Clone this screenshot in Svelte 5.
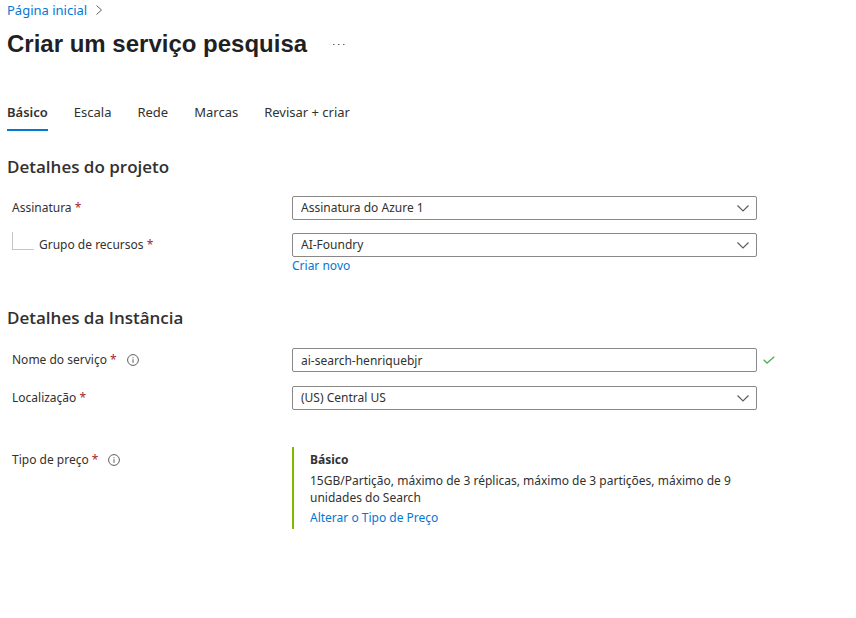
<script>
  const tabs = ['Básico', 'Escala', 'Rede', 'Marcas', 'Revisar + criar'];
  let active = $state('Básico');
  let subscription = $state('Assinatura do Azure 1');
  let group = $state('AI-Foundry');
  let name = $state('ai-search-henriquebjr');
  let region = $state('(US) Central US');
</script>

{#snippet chevron()}
  <svg class="chevron" viewBox="0 0 12 8" aria-hidden="true"><path d="M.5 1.5 6 7 11.5 1.5" /></svg>
{/snippet}

{#snippet info(label)}
  <button class="info" type="button" aria-label={label}>
    <svg viewBox="0 0 12 12" aria-hidden="true">
      <circle cx="6" cy="6" r="5.4" />
      <path d="M6 5.2V8.8M6 3.2V4.2" />
    </svg>
  </button>
{/snippet}

<main>
  <nav class="crumbs" aria-label="Trilha">
    <a href="#inicio">Página inicial</a>
    <svg viewBox="0 0 8 10" aria-hidden="true"><path d="M1.5.5 6.5 5 1.5 9.5" /></svg>
  </nav>

  <header>
    <h1>Criar um serviço pesquisa</h1>
    <button class="more" type="button" aria-label="Mais">
      <svg viewBox="0 0 12 2" aria-hidden="true"><path d="M0 1.5h1.5M5 1.5h1.5M10 1.5h1.5" /></svg>
    </button>
  </header>

  <div class="tabs" role="tablist">
    {#each tabs as tab}
      <button type="button" role="tab" aria-selected={active === tab} class:active={active === tab} onclick={() => (active = tab)}>{tab}</button>
    {/each}
  </div>

  <form onsubmit={(e) => e.preventDefault()}>
    <section>
      <h2>Detalhes do projeto</h2>
      <div class="row">
        <div class="label"><label for="subscription">Assinatura <b>*</b></label></div>
        <div class="field">
          <select id="subscription" bind:value={subscription}><option>Assinatura do Azure 1</option></select>
          {@render chevron()}
        </div>
      </div>
      <div class="row">
        <div class="label child"><span class="branch"></span><label for="group">Grupo de recursos <b>*</b></label></div>
        <div class="field">
          <select id="group" bind:value={group}><option>AI-Foundry</option></select>
          {@render chevron()}
        </div>
        <a class="below" href="#novo">Criar novo</a>
      </div>
    </section>

    <section class="instance">
      <h2>Detalhes da Instância</h2>
      <div class="row">
        <div class="label"><label for="name">Nome do serviço <b>*</b></label>{@render info('Sobre o nome do serviço')}</div>
        <div class="field"><input id="name" type="text" bind:value={name} /></div>
        <svg class="valid" viewBox="0 0 12 8" aria-hidden="true"><path d="M.7 3.8 4 7 11.3.7" /></svg>
      </div>
      <div class="row">
        <div class="label"><label for="region">Localização <b>*</b></label></div>
        <div class="field">
          <select id="region" bind:value={region}><option>(US) Central US</option></select>
          {@render chevron()}
        </div>
      </div>
      <div class="row pricing">
        <div class="label"><span>Tipo de preço <b>*</b></span>{@render info('Sobre o tipo de preço')}</div>
        <div class="tier">
          <strong>Básico</strong>
          <p>15GB/Partição, máximo de 3 réplicas, máximo de 3 partições, máximo de 9 unidades do Search</p>
          <a href="#preco">Alterar o Tipo de Preço</a>
        </div>
      </div>
    </section>
  </form>
</main>

<style>
  :global(body) {
    background: #fff;
  }
  main {
    padding: 0 8px 24px 7px;
    font: 13px/18px 'Noto Sans', 'Open Sans', sans-serif;
    color: #323130;
  }
  form {
    font-size: 12px;
  }
  a {
    color: #0078d4;
    text-decoration: none;
  }
  a:hover {
    text-decoration: underline;
  }
  button {
    padding: 0;
    border: 0;
    background: none;
    font: inherit;
    color: inherit;
    cursor: pointer;
  }
  svg {
    display: block;
    fill: none;
    stroke: #605e5c;
  }
  .crumbs {
    display: flex;
    align-items: center;
    gap: 8px;
    height: 20px;
  }
  .crumbs svg {
    width: 8px;
    height: 10px;
  }
  header {
    display: flex;
    align-items: center;
    gap: 26px;
    margin-top: 8px;
  }
  h1 {
    margin: 0;
    font: bold 24px/32px 'Liberation Sans', Arial, sans-serif;
    color: #1f1f24;
  }
  .more svg {
    width: 12px;
    height: 2px;
  }
  .tabs {
    display: flex;
    gap: 26px;
    margin-top: 35px;
  }
  .tabs button {
    height: 36px;
    border-bottom: 2px solid transparent;
  }
  .tabs .active {
    border-color: #0078d4;
    font-weight: 600;
  }
  section {
    display: grid;
    gap: 13px;
    margin-top: 24px;
  }
  h2 {
    margin: 0 0 4px;
    font: 600 17px/24px 'Open Sans', 'Noto Sans', sans-serif;
  }
  .instance {
    gap: 14px;
    margin-top: 31px;
  }
  .row {
    display: grid;
    grid-template-columns: 280px minmax(0, 465px) 12px;
    column-gap: 5px;
    align-items: center;
  }
  .label {
    display: flex;
    align-items: center;
    gap: 10px;
    padding-left: 5px;
  }
  .label b {
    color: #a4262c;
    font-weight: 400;
  }
  .child {
    gap: 5px;
  }
  .branch {
    align-self: flex-start;
    width: 21px;
    height: 17px;
    margin-top: -4px;
    border: solid #c8c6c4;
    border-width: 0 0 1px 1px;
  }
  .info svg {
    width: 12px;
    height: 12px;
  }
  .field {
    display: grid;
    align-items: center;
  }
  .field > * {
    grid-area: 1 / 1;
  }
  select,
  input {
    box-sizing: border-box;
    width: 100%;
    height: 24px;
    margin: 0;
    padding: 0 8px;
    border: 1px solid #8a8886;
    border-radius: 2px;
    background: #fff;
    font: inherit;
    color: inherit;
    appearance: none;
  }
  .chevron {
    justify-self: end;
    width: 12px;
    height: 8px;
    margin-right: 8px;
    stroke-width: 1.2;
    pointer-events: none;
  }
  .below {
    grid-column: 2;
  }
  .valid {
    width: 12px;
    height: 8px;
    margin-left: 1px;
    stroke: #4caf50;
    stroke-width: 1.3;
  }
  .pricing {
    align-items: start;
    margin-top: 23px;
  }
  .pricing .label {
    margin-top: 4px;
  }
  .tier {
    padding: 4px 0 2px 16px;
    border-left: 2px solid #7fba00;
  }
  .tier strong {
    font-weight: 700;
  }
  p {
    margin: 3px 0;
    line-height: 17px;
  }
</style>
